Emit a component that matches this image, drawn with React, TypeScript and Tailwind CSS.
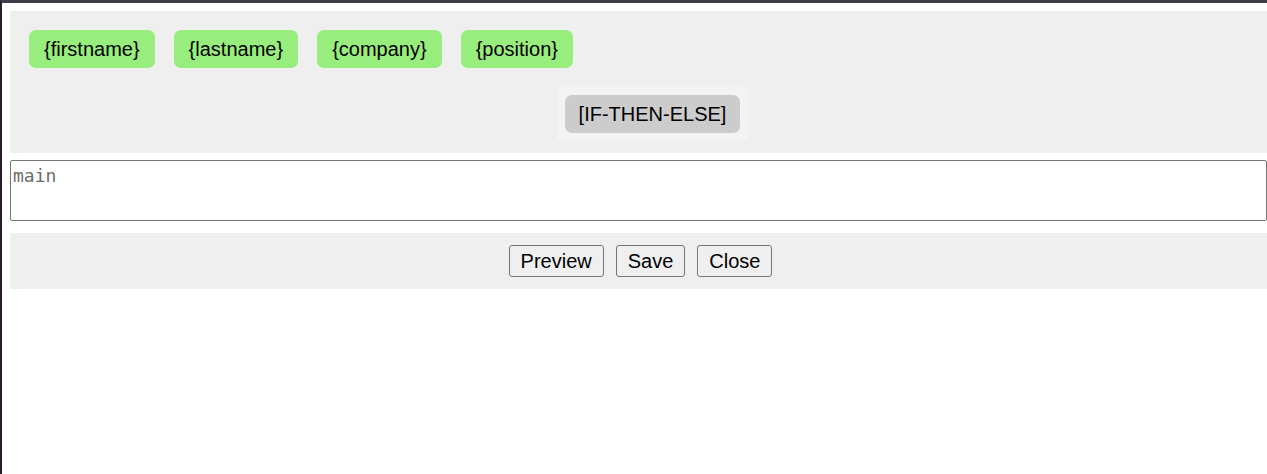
const chips = ["{firstname}", "{lastname}", "{company}", "{position}"];

const App = () => {
  return (
    <div className="min-h-[474px] bg-white border-t-[3px] border-t-[#3e3c4a] border-l-2 border-l-[#2b1a2b] pt-2 pl-2 font-['Liberation_Sans',Arial,sans-serif] text-black">
      <div className="bg-[#efefef] pt-[19px] pb-3">
        <div className="flex gap-[19px] pl-[19px]">
          {chips.map((c) => (
            <span
              key={c}
              className="bg-[#98ee7c] rounded-[7px] px-[15px] h-[38px] flex items-center text-[20px] leading-none"
            >
              {c}
            </span>
          ))}
        </div>
        <div className="flex justify-center pl-[28px] mt-[19px]">
          <div className="bg-[#f3f3f3] p-2">
            <span className="bg-[#cccccc] rounded-[7px] px-[14px] h-[38px] flex items-center text-[20px] leading-none">
              [IF-THEN-ELSE]
            </span>
          </div>
        </div>
      </div>
      <textarea
        placeholder="main"
        className="block mt-[7px] w-full h-[61px] border border-[#767676] rounded-[2px] px-[2px] py-[4px] font-['DejaVu_Sans_Mono',monospace] text-[18px] leading-[22px] placeholder:text-[#6f6b68] placeholder:opacity-100 resize-none"
      />
      <div className="mt-3 bg-[#efefef] py-3 flex justify-center gap-3 pl-1">
        {["Preview", "Save", "Close"].map((b) => (
          <button
            key={b}
            className="h-8 px-[11px] bg-[#efefef] border border-[#767676] rounded-[3px] text-[20px] leading-none"
          >
            {b}
          </button>
        ))}
      </div>
    </div>
  );
};

export default App;
